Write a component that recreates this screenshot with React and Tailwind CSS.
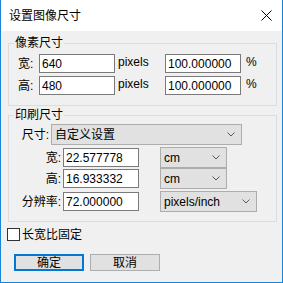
import React from 'react';

const font = { fontFamily: '"Liberation Sans", "Noto Sans CJK SC", sans-serif' };

function Field({ value, width = 'w-[76px]' }) {
  return (
    <div className={`${width} h-[19px] bg-white border border-[#7a7a7a] pl-[2px] flex items-center text-[12px] leading-none text-black`}>
      {value}
    </div>
  );
}

function Chevron() {
  return (
    <svg width="8" height="5" viewBox="0 0 8 5" className="shrink-0">
      <path d="M0.5 0.5 L4 4 L7.5 0.5" fill="none" stroke="#5a5a5a" strokeWidth="1" />
    </svg>
  );
}

function Select({ value, width }) {
  return (
    <div className={`${width} h-[21px] bg-[#e1e1e1] border border-[#adadad] pl-[3px] pr-[6px] flex items-center justify-between text-[12px] leading-none text-black`}>
      <span>{value}</span>
      <Chevron />
    </div>
  );
}

function Group({ title, children, className = '' }) {
  return (
    <fieldset className={`mx-0 ml-[7px] w-[269px] border border-[#dcdcdc] ${className}`}>
      <legend className="ml-[5px] px-[1px] text-[12px] leading-[14px]">{title}</legend>
      {children}
    </fieldset>
  );
}

export default function App() {
  return (
    <div className="w-[283px] h-[283px] bg-[#f0f0f0] border-x border-b border-[#1883d7] flex flex-col text-black" style={font}>
      <div className="h-[31px] bg-white flex items-center justify-between pl-[8px] pr-[10px] shrink-0">
        <span className="text-[12px] leading-none">设置图像尺寸</span>
        <svg width="11" height="11" viewBox="0 0 11 11">
          <path d="M0.5 0.5 L10.5 10.5 M10.5 0.5 L0.5 10.5" stroke="#000" strokeWidth="1" />
        </svg>
      </div>

      <div className="pt-[5px] flex flex-col">
        <Group title="像素尺寸" className="pb-[10px]">
          <div className="mt-[4px] flex flex-col gap-[3px] pl-[9px]">
            {[['宽:', '640'], ['高:', '480']].map(([label, v]) => (
              <div key={label} className="flex items-center h-[19px] text-[12px]">
                <span className="w-[21px]">{label}</span>
                <Field value={v} />
                <span className="ml-[3px] w-[47px] -mt-[3px]">pixels</span>
                <Field value="100.000000" />
                <span className="ml-[5px] -mt-[3px]">%</span>
              </div>
            ))}
          </div>
        </Group>

        <Group title="印刷尺寸" className="mt-[2px] pb-[9px]">
          <div className="mt-[2px] flex flex-col text-[12px]">
            <div className="flex items-center h-[21px]">
              <span className="w-[40px] text-right">尺寸:</span>
              <div className="ml-[2px]">
                <Select value="自定义设置" width="w-[191px]" />
              </div>
            </div>
            <div className="flex items-center h-[21px] mt-[2px]">
              <span className="w-[52px] text-right">宽:</span>
              <div className="ml-[2px]"><Field value="22.577778" /></div>
              <div className="ml-[21px]"><Select value="cm" width="w-[67px]" /></div>
            </div>
            <div className="flex items-center h-[21px] mt-[0px]">
              <span className="w-[52px] text-right">高:</span>
              <div className="ml-[2px]"><Field value="16.933332" /></div>
              <div className="ml-[21px]"><Select value="cm" width="w-[67px]" /></div>
            </div>
            <div className="flex items-center h-[21px] mt-[2px]">
              <span className="w-[52px] text-right">分辨率:</span>
              <div className="ml-[2px]"><Field value="72.000000" /></div>
              <div className="ml-[21px]"><Select value="pixels/inch" width="w-[97px]" /></div>
            </div>
          </div>
        </Group>

        <div className="mt-[6px] ml-[6px] h-[13px] flex items-center text-[12px] leading-none">
          <div className="w-[13px] h-[13px] bg-white border border-[#333]" />
          <span className="ml-[2px]">长宽比固定</span>
        </div>

        <div className="mt-[13px] ml-[13px] flex gap-[6px] text-[12px] leading-none">
          <div className="w-[70px] h-[17px] bg-[#e1e1e1] border-2 border-[#0078d7] flex items-center justify-center">确定</div>
          <div className="w-[70px] h-[17px] bg-[#e1e1e1] border border-[#adadad] flex items-center justify-center">取消</div>
        </div>
      </div>
    </div>
  );
}
